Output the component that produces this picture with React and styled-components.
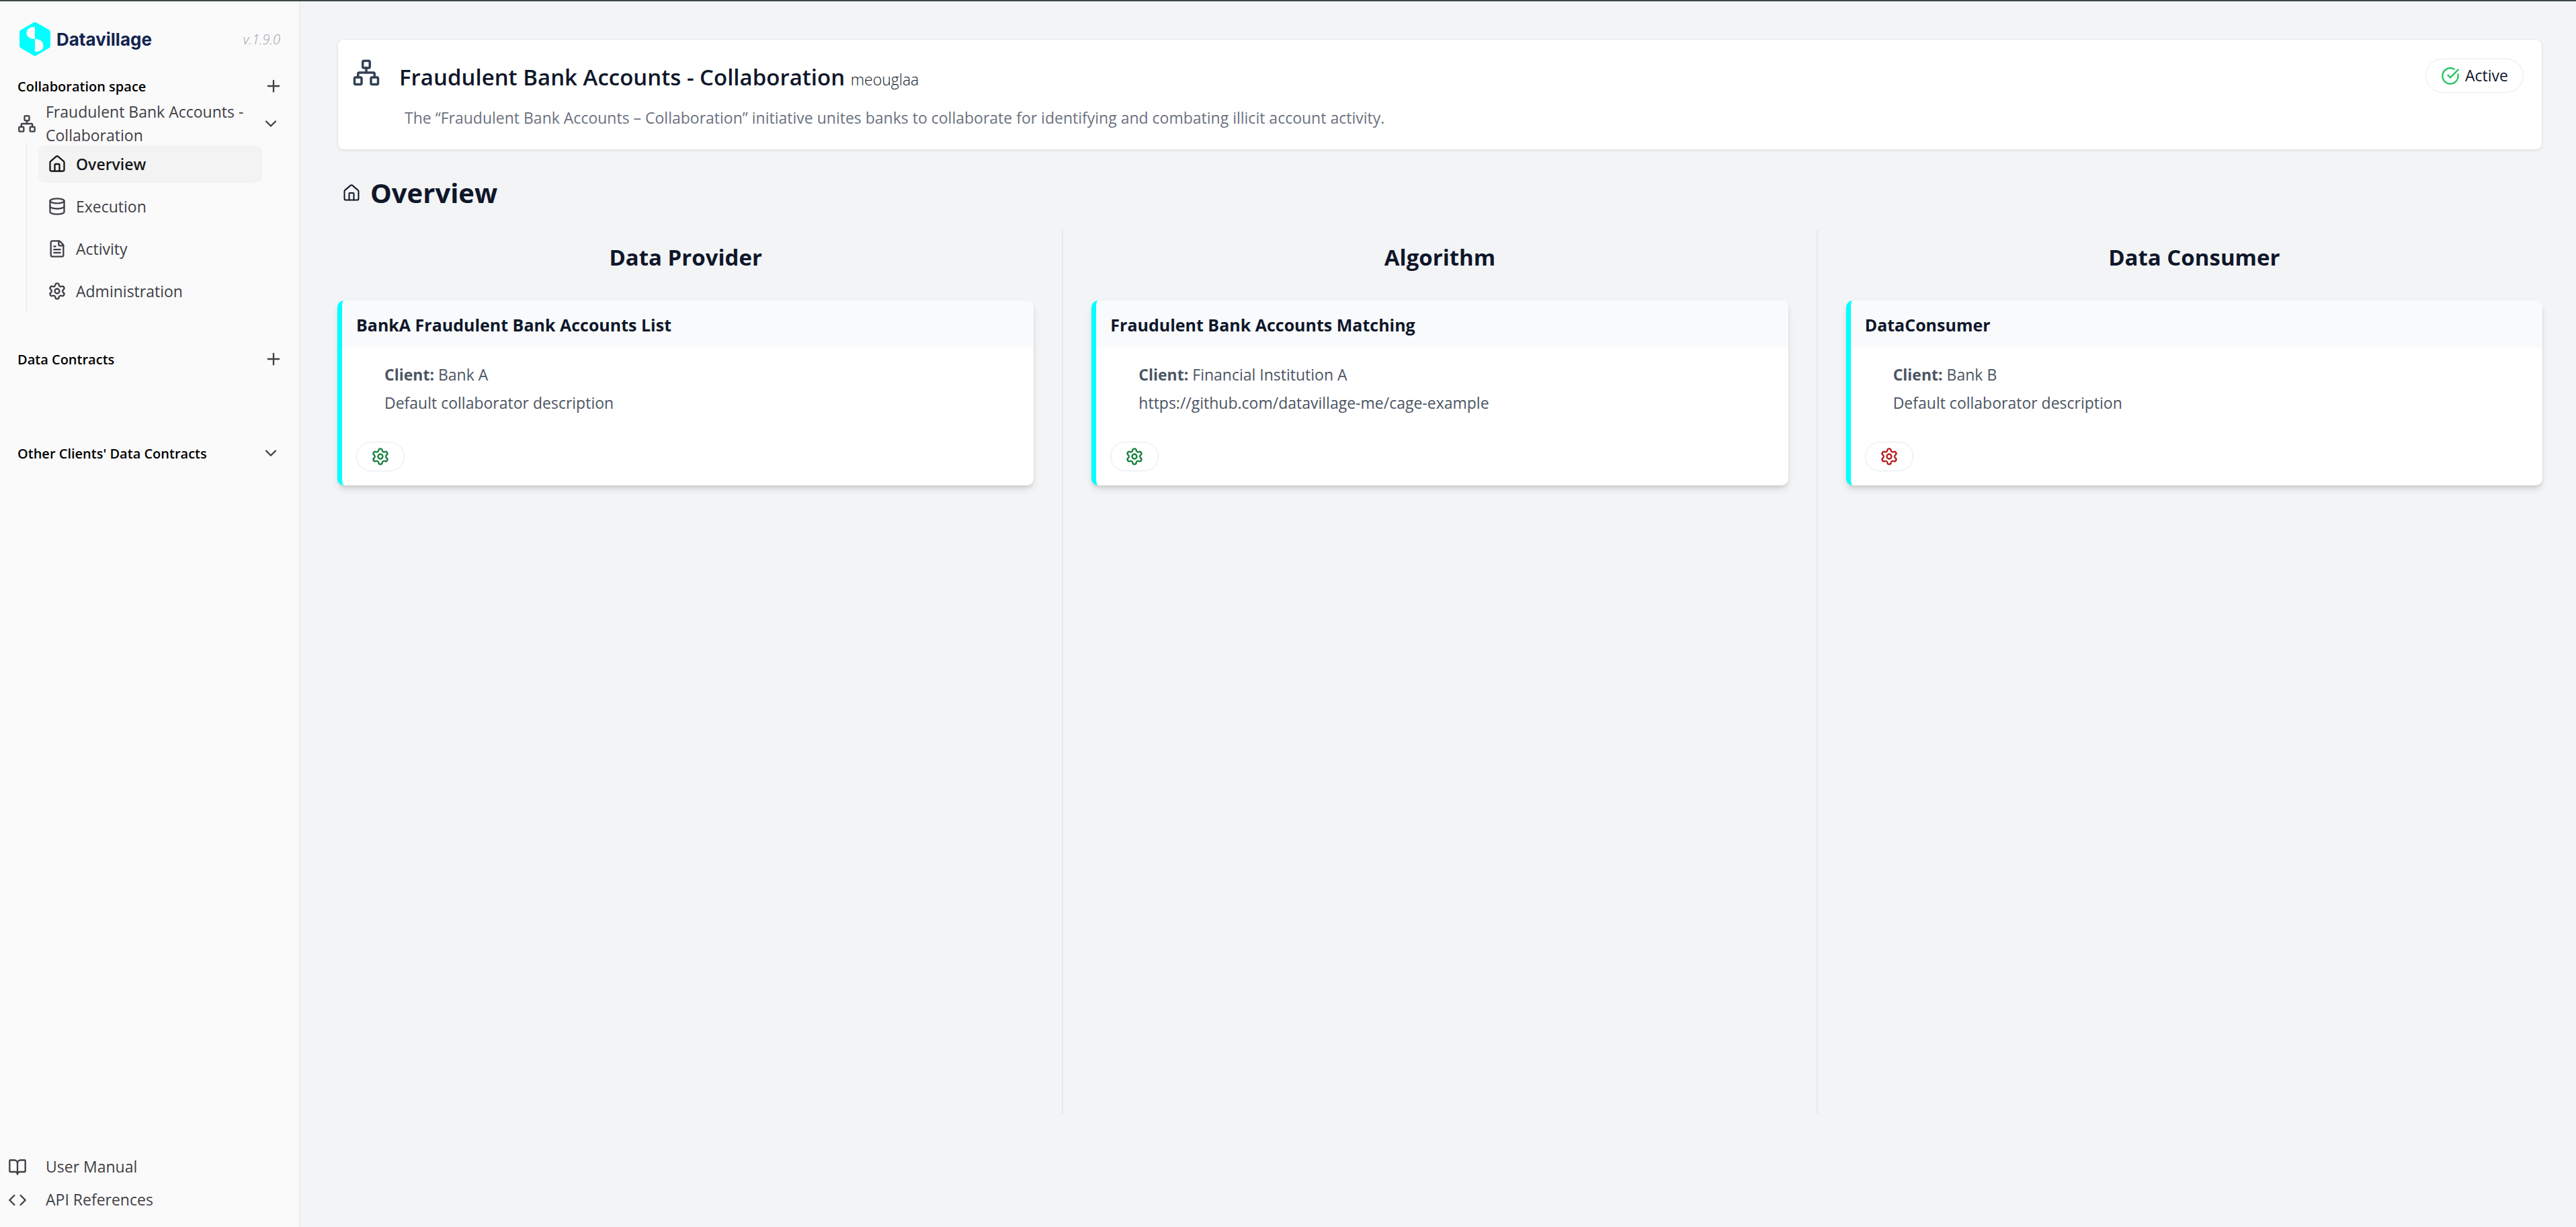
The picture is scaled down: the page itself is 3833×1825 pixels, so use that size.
import React from 'react';
import styled, { createGlobalStyle } from 'styled-components';
import {
  BookOpen,
  ChevronDown,
  CircleCheckBig,
  Code,
  Database,
  FileText,
  House,
  Network,
  Plus,
  Settings,
} from 'lucide-react';

const GlobalStyle = createGlobalStyle`
  *, *::before, *::after { box-sizing: border-box; }
  body {
    margin: 0;
    background: #f3f4f6;
    color: #0f172a;
    font-family: "Open Sans", "Noto Sans", sans-serif;
    font-size: 23px;
    line-height: 35px;
  }
  h1, h2, h3, p, ul { margin: 0; padding: 0; }
  ul { list-style: none; }
  a { color: inherit; text-decoration: none; }
  button {
    padding: 0;
    border: 0;
    background: none;
    color: inherit;
    font: inherit;
    cursor: pointer;
  }
  svg { display: block; flex: none; }
`;

const Shell = styled.div`
  display: flex;
  min-height: 100vh;
  border-top: 2px solid #3f4844;
`;

/* Sidebar */

const Sidebar = styled.aside`
  display: flex;
  flex-direction: column;
  flex: none;
  width: 446px;
  padding-bottom: 16px;
  border-right: 1px solid #e5e7eb;
  background: #fafafa;
  color: #3f3f46;
`;

const Brand = styled.header`
  display: flex;
  align-items: center;
  justify-content: space-between;
  height: 112px;
  padding: 0 28px;
`;

const BrandLink = styled.a`
  display: flex;
  align-items: center;
  gap: 8px;
  color: #12234f;
  font-family: Inter, "Open Sans", sans-serif;
  font-size: 26px;
  font-weight: 700;
`;

const Version = styled.span`
  color: #a1a1aa;
  font-size: 20px;
  font-style: italic;
  font-weight: 300;
`;

const Section = styled.section`
  margin-bottom: ${(p) => p.$space}px;
`;

const SectionHead = styled.div`
  display: flex;
  align-items: center;
  justify-content: space-between;
  height: 28px;
  padding: 0 ${(p) => (p.$inset ? 28 : 24)}px 0 26px;
`;

const SectionTitle = styled.h2`
  color: #000;
  font-size: 20px;
  font-weight: 600;
`;

const ProjectRow = styled.button`
  display: flex;
  align-items: center;
  gap: 14px;
  width: 100%;
  height: 56px;
  margin-top: 14px;
  padding: 0 28px 0 26px;
  text-align: left;
`;

const ProjectName = styled.span`
  flex: 1;
`;

const Tree = styled.ul`
  display: flex;
  flex-direction: column;
  gap: 7px;
  margin: 0 55px 0 39px;
  padding: 4px 0 3px 17px;
  border-left: 1px solid #e5e7eb;
`;

const TreeLink = styled.a`
  display: flex;
  align-items: center;
  gap: 14px;
  height: 56px;
  padding: 0 14px;
  border-radius: 10px;
  background: ${(p) => (p.$active ? '#f3f3f3' : 'transparent')};
  color: ${(p) => (p.$active ? '#18181b' : 'inherit')};
  font-weight: ${(p) => (p.$active ? 600 : 400)};
`;

const HelpLinks = styled.nav`
  margin-top: auto;
`;

const HelpLink = styled.a`
  display: flex;
  align-items: center;
  gap: 28px;
  height: 49px;
  padding-left: 12px;
`;

/* Main area */

const Main = styled.main`
  display: flex;
  flex-direction: column;
  flex: 1;
  min-width: 0;
  padding: 56px 50px 168px 56px;
`;

const Summary = styled.header`
  display: flex;
  align-items: flex-start;
  gap: 28px;
  height: 165px;
  padding: 28px 27px 28px 21px;
  border: 1px solid #e5e7eb;
  border-radius: 10px;
  background: #fff;
  box-shadow: 0 2px 4px rgba(0, 0, 0, 0.06);
`;

const SummaryIcon = styled.span`
  color: #334155;
`;

const SummaryText = styled.div`
  flex: 1;
`;

const SummaryTitle = styled.h1`
  font-size: 33px;
  font-weight: 600;
  line-height: 56px;
`;

const ProjectCode = styled.span`
  font-size: 23px;
  font-weight: 300;
`;

const SummaryNote = styled.p`
  padding: 12px 0 0 8px;
  color: #6b7280;
`;

const Status = styled.span`
  display: flex;
  align-items: center;
  gap: 8px;
  height: 51px;
  padding: 0 22px;
  border: 1px solid #e2e8f0;
  border-radius: 26px;

  svg { color: #22c55e; }
`;

const PageTitle = styled.h2`
  display: flex;
  align-items: center;
  gap: 14px;
  margin: 36px 0 28px;
  padding-left: 7px;
  font-size: 40px;
  font-weight: 700;
  line-height: 56px;
`;

const Columns = styled.div`
  display: grid;
  flex: 1;
  grid-template-columns: 1fr 2px 1fr 2px 1fr;
  column-gap: 42px;
`;

const Divider = styled.div`
  background: #e2e8f0;
`;

const Column = styled.section`
  min-width: 0;
`;

const ColumnTitle = styled.h3`
  margin: 12px 0 36px;
  font-size: 33px;
  font-weight: 700;
  line-height: 56px;
  text-align: center;
`;

const Card = styled.article`
  overflow: hidden;
  border-left: 7px solid #00ffff;
  border-radius: 10px;
  background: #fff;
  box-shadow: 0 7px 12px -2px rgba(0, 0, 0, 0.12), 0 3px 6px -2px rgba(0, 0, 0, 0.12);
`;

const CardTitle = styled.h4`
  margin: 0;
  padding: 15px 21px 13px;
  background: #f8fafc;
  font-size: 25px;
  font-weight: 700;
  line-height: 42px;
`;

const CardBody = styled.div`
  padding: 19px 63px 28px;
  color: #4b5563;
  line-height: 42px;
`;

const CardActions = styled.div`
  display: flex;
  padding: 9px 21px 21px;
`;

const GearButton = styled.button`
  display: flex;
  align-items: center;
  justify-content: center;
  width: 72px;
  height: 44px;
  border: 1px solid #e2e8f0;
  border-radius: 22px;
  color: ${(p) => (p.$ok ? '#15803d' : '#b91c1c')};
`;

const ICON = 28;

const LogoMark = () => (
  <svg width="48" height="52" viewBox="0 0 48 52" aria-hidden="true">
    <path
      fill="#00ffff"
      d="M22 1.6a4 4 0 0 1 4 0l19 10.9a4 4 0 0 1 2 3.5v20a4 4 0 0 1-2 3.500L26 50.4a4 4 0 0 1-4 0L3 39.5A4 4 0 0 1 1 36V16a4 4 0 0 1 2-3.500z"
    />
    <path fill="#fafafa" d="M24 8v18c-7 0-12.500-3-12.500-9S16.500 8 24 8z" />
    <path fill="#fafafa" d="M24 26c7 0 12.500 4 12.500 10S31.500 45 24 45z" />
  </svg>
);

const TREE = [
  { label: 'Overview', icon: House, active: true },
  { label: 'Execution', icon: Database },
  { label: 'Activity', icon: FileText },
  { label: 'Administration', icon: Settings },
];

const COLUMNS = [
  {
    title: 'Data Provider',
    name: 'BankA Fraudulent Bank Accounts List',
    client: 'Bank A',
    note: 'Default collaborator description',
    ok: true,
  },
  {
    title: 'Algorithm',
    name: 'Fraudulent Bank Accounts Matching',
    client: 'Financial Institution A',
    note: 'https://github.com/datavillage-me/cage-example',
    ok: true,
  },
  {
    title: 'Data Consumer',
    name: 'DataConsumer',
    client: 'Bank B',
    note: 'Default collaborator description',
    ok: false,
  },
];

function SideNav() {
  return (
    <Sidebar>
      <Brand>
        <BrandLink href="#home">
          <LogoMark />
          Datavillage
        </BrandLink>
        <Version>v.1.9.0</Version>
      </Brand>

      <Section $space={56}>
        <SectionHead>
          <SectionTitle>Collaboration space</SectionTitle>
          <button type="button" aria-label="Add collaboration space">
            <Plus size={ICON} />
          </button>
        </SectionHead>
        <ProjectRow type="button" aria-expanded="true">
          <Network size={ICON} />
          <ProjectName>Fraudulent Bank Accounts - Collaboration</ProjectName>
          <ChevronDown size={ICON} />
        </ProjectRow>
        <Tree>
          {TREE.map(({ label, icon: Icon, active }) => (
            <li key={label}>
              <TreeLink href={`#${label.toLowerCase()}`} $active={active}>
                <Icon size={ICON} />
                {label}
              </TreeLink>
            </li>
          ))}
        </Tree>
      </Section>

      <Section $space={112}>
        <SectionHead>
          <SectionTitle>Data Contracts</SectionTitle>
          <button type="button" aria-label="Add data contract">
            <Plus size={ICON} />
          </button>
        </SectionHead>
      </Section>

      <Section $space={56}>
        <SectionHead $inset>
          <SectionTitle>Other Clients' Data Contracts</SectionTitle>
          <button type="button" aria-label="Show other clients' data contracts">
            <ChevronDown size={ICON} />
          </button>
        </SectionHead>
      </Section>

      <HelpLinks>
        <HelpLink href="#manual">
          <BookOpen size={ICON} />
          User Manual
        </HelpLink>
        <HelpLink href="#api">
          <Code size={ICON} />
          API References
        </HelpLink>
      </HelpLinks>
    </Sidebar>
  );
}

function CollaboratorColumn({ title, name, client, note, ok }) {
  return (
    <Column>
      <ColumnTitle>{title}</ColumnTitle>
      <Card>
        <CardTitle>{name}</CardTitle>
        <CardBody>
          <p>
            <b>Client:</b> {client}
          </p>
          <p>{note}</p>
        </CardBody>
        <CardActions>
          <GearButton type="button" aria-label={`${name} settings`} $ok={ok}>
            <Settings size={ICON} />
          </GearButton>
        </CardActions>
      </Card>
    </Column>
  );
}

export default function App() {
  return (
    <Shell>
      <GlobalStyle />
      <SideNav />
      <Main>
        <Summary>
          <SummaryIcon>
            <Network size={42} />
          </SummaryIcon>
          <SummaryText>
            <SummaryTitle>
              Fraudulent Bank Accounts - Collaboration <ProjectCode>meouglaa</ProjectCode>
            </SummaryTitle>
            <SummaryNote>
              The “Fraudulent Bank Accounts – Collaboration” initiative unites banks to collaborate
              for identifying and combating illicit account activity.
            </SummaryNote>
          </SummaryText>
          <Status>
            <CircleCheckBig size={ICON} />
            Active
          </Status>
        </Summary>

        <PageTitle>
          <House size={ICON} strokeWidth={1.75} />
          Overview
        </PageTitle>

        <Columns>
          {COLUMNS.map((column, index) => (
            <React.Fragment key={column.title}>
              {index > 0 && <Divider />}
              <CollaboratorColumn {...column} />
            </React.Fragment>
          ))}
        </Columns>
      </Main>
    </Shell>
  );
}
